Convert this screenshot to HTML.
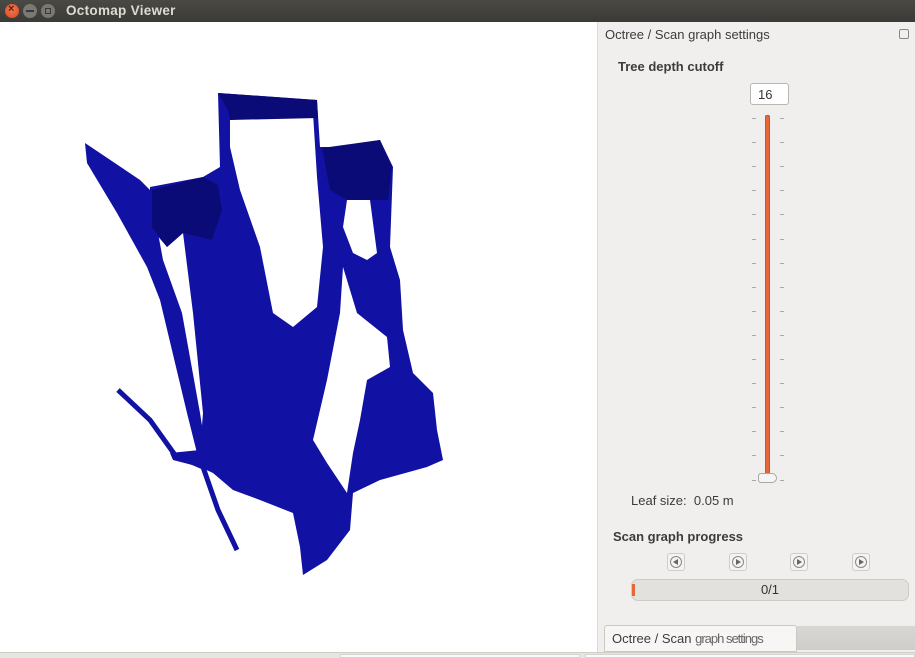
<!DOCTYPE html>
<html><head><meta charset="utf-8"><style>
*{margin:0;padding:0;box-sizing:border-box}
body{width:915px;height:658px;overflow:hidden;background:#fff;font-family:"Liberation Sans","DejaVu Sans",sans-serif;position:relative}
.tb{position:absolute;left:0;top:0;width:915px;height:22px;background:linear-gradient(#4a4944,#3b3a36);}
.tb .t{position:absolute;left:66px;top:3px;color:#dfdbd2;font-weight:bold;font-size:13.5px;letter-spacing:.3px}
.wb{position:absolute;top:4px;width:14px;height:14px;border-radius:50%}
.panel{position:absolute;left:597px;top:22px;width:318px;height:630px;background:#f0efed;border-left:1px solid #dcdad5}
.abs{position:absolute}
.lbl{font-size:13px;color:#3c3c3c}
.b{font-weight:bold}
.tick{position:absolute;width:4px;height:1px;background:#a8a8a8}
.btn{position:absolute;top:553px;width:18px;height:18px;border:1px solid #cfcdc8;border-radius:3px;background:#f4f3f1}
.btn i{position:absolute;left:2px;top:2px;width:12px;height:12px;border:1.5px solid #888;border-radius:50%}
.btn b{position:absolute;left:6px;top:5px;width:0;height:0;border-left:5px solid #666;border-top:3px solid transparent;border-bottom:3px solid transparent}
</style></head><body>
<div class="tb">
 <div class="wb" style="left:5px;background:radial-gradient(circle at 50% 40%,#f37a50,#d9461e)"><span style="position:absolute;left:3px;top:-1px;font-size:11px;color:#5a2010;font-weight:bold">×</span></div>
 <div class="wb" style="left:23px;background:#7a7873"><span style="position:absolute;left:3px;top:6px;width:8px;height:2px;background:#3a3935"></span></div>
 <div class="wb" style="left:41px;background:#7a7873"><span style="position:absolute;left:4px;top:4px;width:6px;height:6px;border:1px solid #3a3935"></span></div>
 <div class="t">Octomap Viewer</div>
</div>

<svg class="abs" style="left:0;top:22px" width="597" height="630" viewBox="0 22 597 630">
 <g fill="#1111a3" fill-rule="evenodd">
  <polygon points="85,143 140,180 150,190 163,260 182,313 200,413 207,457 213,470 200,465 187,413 160,300 147,267 117,213 87,163"/>
  <path d="M150,187 L203,177 L220,167 L218,93 L317,100 L320,147 L333,147 L380,140 L393,167 L390,247 L400,280 L403,330 L413,373 L433,393 L437,430 L443,460 L427,467 L380,480 L353,493 L350,530 L327,560 L303,575 L300,547 L293,513 L260,500 L233,490 L213,473 L200,467 L173,460 L170,453 L200,450 L203,413 L193,313 L183,233 L167,247 L150,227 Z
  M230,120 L313,113 L317,177 L323,247 L317,307 L293,327 L273,313 L260,247 L240,190 L230,147 Z
  M347,200 L370,200 L377,253 L367,260 L353,253 L343,227 Z
  M343,267 L357,313 L387,337 L390,367 L367,380 L360,420 L353,453 L347,493 L327,463 L313,440 L327,380 L340,313 Z"/>
  <polyline points="118,390 150,420 175,455 203,467 218,510 237,550" fill="none" stroke="#1111a3" stroke-width="5"/>
 </g>
 <g fill="#0b0b78">
  <polygon points="218,93 317,100 318,118 230,120 228,110"/>
  <polygon points="322,148 380,140 392,167 388,200 347,200 330,190"/>
  <polygon points="152,190 203,177 218,185 222,210 212,240 183,233 167,247 152,227"/>
 </g>
</svg>

<div class="panel"></div>
<div class="abs lbl" style="left:605px;top:27px">Octree / Scan graph settings</div>
<div class="abs" style="left:899px;top:29px;width:10px;height:10px;border:1px solid #888;border-radius:2px"></div>
<div class="abs lbl b" style="left:618px;top:59px">Tree depth cutoff</div>
<div class="abs" style="left:750px;top:83px;width:39px;height:22px;background:#fff;border:1px solid #b8b6b1;border-radius:3px;font-size:13px;color:#333;padding:3px 0 0 7px">16</div>
<div class="abs" style="left:765px;top:115px;width:5px;height:364px;background:#e8673a;border-radius:2px;box-shadow:0 0 0 1px #c9552d inset"></div>
<div id="ticks"></div>
<div class="abs" style="left:758px;top:473px;width:19px;height:10px;background:#f6f5f3;border:1px solid #a9a7a2;border-radius:5px 8px 8px 5px"></div>
<div class="abs lbl" style="left:631px;top:493px">Leaf size:&nbsp; 0.05 m</div>
<div class="abs lbl b" style="left:613px;top:529px">Scan graph progress</div>
<div class="btn" style="left:667px"><i></i><b style="border-left:none;border-right:5px solid #666;left:5px"></b></div>
<div class="btn" style="left:729px"><i></i><b></b></div>
<div class="btn" style="left:790px"><i></i><b></b></div>
<div class="btn" style="left:852px"><i></i><b></b></div>
<div class="abs" style="left:631px;top:579px;width:278px;height:22px;background:#e2e1de;border:1px solid #cdcbc6;border-radius:7px;text-align:center;font-size:13px;color:#333;line-height:20px">0/1</div>
<div class="abs" style="left:632px;top:584px;width:3px;height:12px;background:#e8673a"></div>
<div class="abs" style="left:797px;top:626px;width:118px;height:24px;background:linear-gradient(#d8d7d3,#cfcdc9)"></div>
<div class="abs lbl" style="left:604px;top:625px;width:193px;height:27px;background:#f7f6f4;border:1px solid #cbc9c4;border-radius:3px 3px 0 0;padding:5px 0 0 7px;white-space:nowrap;overflow:hidden">Octree / Scan <span style="color:#666;letter-spacing:-1px">graph settings</span></div>
<div class="abs" style="left:0;top:652px;width:915px;height:6px;background:#e6e5e2;border-top:1px solid #cfcdc9"></div>
<div class="abs" style="left:340px;top:654px;width:240px;height:4px;background:#fafafa;border:1px solid #d6d4cf"></div>
<div class="abs" style="left:585px;top:654px;width:330px;height:4px;background:#fafafa;border:1px solid #d6d4cf"></div>
<script>
var h='';for(var i=0;i<16;i++){var y=118+i*24.1;h+='<div class="tick" style="left:752px;top:'+y+'px"></div><div class="tick" style="left:780px;top:'+y+'px"></div>';}
document.getElementById('ticks').outerHTML=h;
</script>
</body></html>
